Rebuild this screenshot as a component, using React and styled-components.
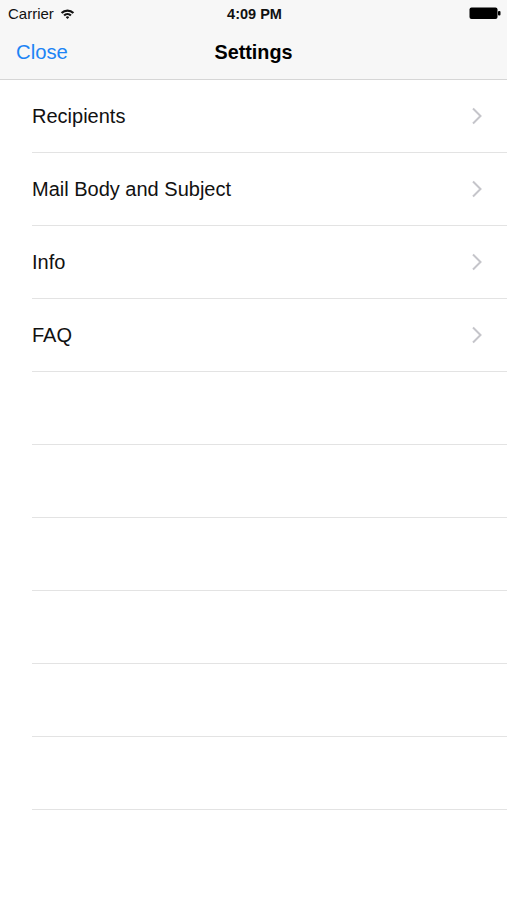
import React from "react";
import styled, { createGlobalStyle } from "styled-components";

const Global = createGlobalStyle`
  html, body { margin: 0; padding: 0; background: #ffffff; }
  body { font-family: "Liberation Sans", Arial, sans-serif; -webkit-font-smoothing: antialiased; }
  * { box-sizing: border-box; }
`;

const Screen = styled.div`
  width: 507px;
  height: 900px;
  background: #ffffff;
  overflow: hidden;
`;

const Header = styled.header`
  background: #f7f7f7;
  border-bottom: 1px solid #d6d6d6;
  height: 80px;
  display: flex;
  flex-direction: column;
`;

const StatusBar = styled.div`
  height: 27px;
  display: grid;
  grid-template-columns: 1fr auto 1fr;
  align-items: center;
  padding: 0 6px 0 8px;
  font-size: 15px;
  color: #111;
`;

const Carrier = styled.div`
  display: flex;
  align-items: center;
  gap: 6px;
  font-size: 15px;
`;

const Time = styled.div`
  font-weight: 700;
  font-size: 14.5px;
`;

const BatteryWrap = styled.div`
  justify-self: end;
  display: flex;
  align-items: center;
`;

const NavBar = styled.div`
  flex: 1;
  display: grid;
  grid-template-columns: 1fr auto 1fr;
  align-items: center;
  padding: 0 16px 2px 16px;
`;

const CloseButton = styled.span`
  color: #1d84f5;
  font-size: 20.3px;
  justify-self: start;
`;

const Title = styled.span`
  font-size: 19.8px;
  font-weight: 700;
  color: #000;
`;

const List = styled.div`
  display: flex;
  flex-direction: column;
`;

const Row = styled.div`
  height: 73px;
  margin-left: 32px;
  padding-right: 24px;
  border-bottom: 1px solid #e3e3e3;
  display: flex;
  align-items: center;
  justify-content: space-between;
  font-size: 20px;
  color: #111;
`;

const Chevron = () => (
  <svg width="12" height="18" viewBox="0 0 12 18">
    <path d="M2 1.5 L9.5 9 L2 16.5" fill="none" stroke="#c5c5ca" strokeWidth="2" />
  </svg>
);

const Wifi = () => (
  <svg width="15" height="12" viewBox="0 0 15 12">
    <path d="M0.8 4.2 A9.5 9.5 0 0 1 14.2 4.2 L12.6 5.8 A7.3 7.3 0 0 0 2.4 5.8 Z" fill="#111" />
    <path d="M3.3 6.7 A6 6 0 0 1 11.7 6.7 L10.1 8.3 A3.8 3.8 0 0 0 4.9 8.3 Z" fill="#111" />
    <path d="M5.8 9.2 A2.4 2.4 0 0 1 9.2 9.2 L7.5 11 Z" fill="#111" />
  </svg>
);

const Battery = () => (
  <svg width="32" height="13" viewBox="0 0 32 13">
    <rect x="0.5" y="0.5" width="28" height="11.5" rx="2" fill="#000" />
    <rect x="29" y="4" width="2.5" height="4.5" rx="1" fill="#000" />
  </svg>
);

const items = ["Recipients", "Mail Body and Subject", "Info", "FAQ"];

export default function App() {
  return (
    <Screen>
      <Global />
      <Header>
        <StatusBar>
          <Carrier>
            Carrier <Wifi />
          </Carrier>
          <Time>4:09 PM</Time>
          <BatteryWrap>
            <Battery />
          </BatteryWrap>
        </StatusBar>
        <NavBar>
          <CloseButton>Close</CloseButton>
          <Title>Settings</Title>
          <span />
        </NavBar>
      </Header>
      <List>
        {items.map((t) => (
          <Row key={t}>
            <span>{t}</span>
            <Chevron />
          </Row>
        ))}
        {Array.from({ length: 6 }).map((_, i) => (
          <Row key={"e" + i} />
        ))}
      </List>
    </Screen>
  );
}
